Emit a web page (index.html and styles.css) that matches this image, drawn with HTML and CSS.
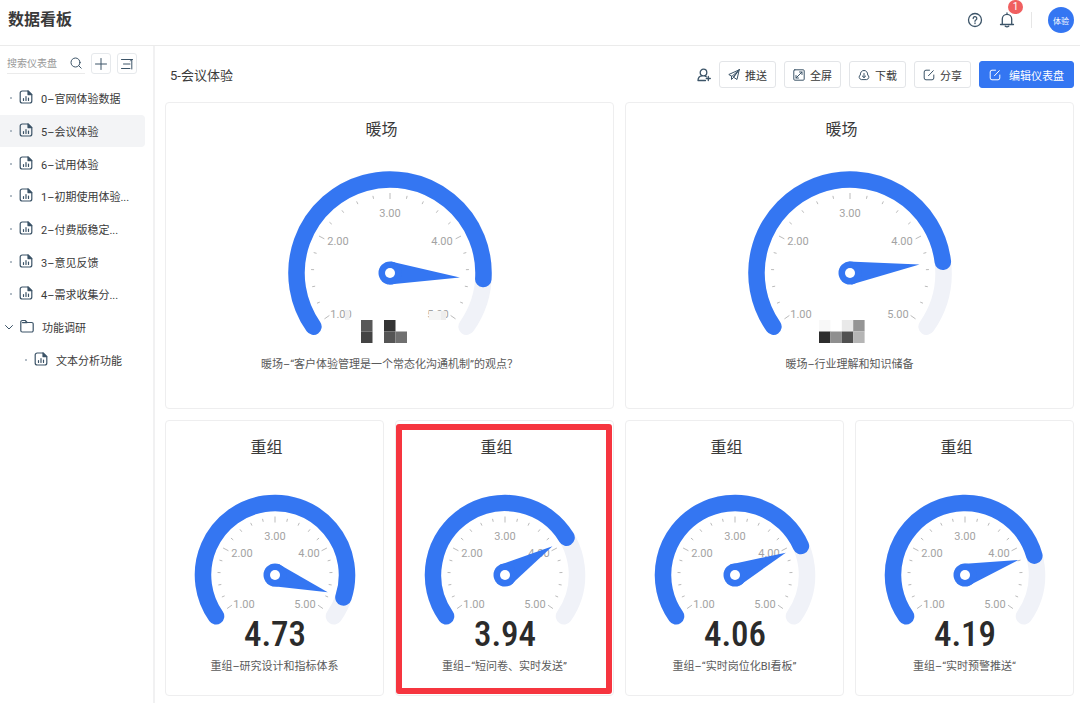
FILE: index.html
```
<!DOCTYPE html>
<html lang="zh-CN">
<head>
  <meta charset="UTF-8" />
  <meta name="viewport" content="width=device-width, initial-scale=1.0" />
  <title>数据看板</title>
  <link rel="stylesheet" href="styles.css">
</head>
<body>
  <svg class="sprite" aria-hidden="true">
    <symbol id="icon-file" viewBox="0 0 14 14">
      <path d="M9 1H3.200A2 2 0 0 0 1.200 3V11a2 2 0 0 0 2 2h7.600a2 2 0 0 0 2-2V4.600z" />
      <path d="M9 1v3.600h3.800z" fill="currentColor" />
      <path d="M4.500 10.500V8.500M7 10.500V6.500M9.500 10.500V8" />
    </symbol>
    <symbol id="icon-folder" viewBox="0 0 14 14">
      <path d="M.8 11.500V3a1.500 1.500 0 0 1 1.500-1.500h3l1.700 2h4.700a1.500 1.500 0 0 1 1.500 1.500v6.500a1.500 1.500 0 0 1-1.500 1.500H2.300a1.500 1.500 0 0 1-1.500-1.500z" />
      <path d="M2.500 3.600H7" />
    </symbol>
    <symbol id="icon-edit" viewBox="0 0 12 12">
      <path d="M6.500 1.200H3a1.800 1.800 0 0 0-1.800 1.800v6A1.800 1.800 0 0 0 3 10.800h6A1.800 1.800 0 0 0 10.800 9V6M5.500 6.700l4.800-5" />
    </symbol>
  </svg>

  <header class="topbar">
    <h1>数据看板</h1>
    <div class="topbar-tools">
      <button class="icon-btn" aria-label="帮助">
        <svg class="icon icon-md" viewBox="0 0 16 16"><circle cx="8" cy="8" r="6.500" /><path d="M6.200 6.500a1.800 1.800 0 1 1 2.700 1.500C8.200 8.400 8 8.700 8 9.300M8 11v.5" /></svg>
      </button>
      <button class="icon-btn bell" aria-label="通知">
        <svg class="icon icon-md" viewBox="0 0 16 16"><path d="M1.500 12.500h13M3.300 12.500V7a4.700 4.700 0 0 1 9.400 0v5.500M8 2.300V1M6.300 14.200q1.700 1.200 3.400 0" /></svg>
        <span class="badge">1</span>
      </button>
      <span class="divider"></span>
      <button class="avatar">体验</button>
    </div>
  </header>

  <div class="layout">
    <aside class="sidebar">
      <div class="search-row">
        <label class="search">
          <input type="search" placeholder="搜索仪表盘" aria-label="搜索仪表盘">
          <svg class="icon icon-sm" viewBox="0 0 12 12"><circle cx="5.500" cy="5.500" r="4.500" /><path d="M8.800 8.800l2.400 2.400" /></svg>
        </label>
        <button class="square-btn" aria-label="新建"><svg class="icon icon-sm" viewBox="0 0 12 12"><path d="M6 .5v11M.5 6h11" /></svg></button>
        <button class="square-btn" aria-label="排序"><svg class="icon icon-sm" viewBox="0 0 12 12"><path d="M.5 1.500h11M2.500 6H9M.5 10.500H9M10.800 11V1.500L9.500 3" /></svg></button>
      </div>
      <ul class="tree">
        <li><a href="#"><i class="dot"></i><svg class="icon icon-file"><use href="#icon-file" /></svg>0–官网体验数据</a></li>
        <li><a href="#" class="active"><i class="dot"></i><svg class="icon icon-file"><use href="#icon-file" /></svg>5–会议体验</a></li>
        <li><a href="#"><i class="dot"></i><svg class="icon icon-file"><use href="#icon-file" /></svg>6–试用体验</a></li>
        <li><a href="#"><i class="dot"></i><svg class="icon icon-file"><use href="#icon-file" /></svg>1–初期使用体验...</a></li>
        <li><a href="#"><i class="dot"></i><svg class="icon icon-file"><use href="#icon-file" /></svg>2–付费版稳定...</a></li>
        <li><a href="#"><i class="dot"></i><svg class="icon icon-file"><use href="#icon-file" /></svg>3–意见反馈</a></li>
        <li><a href="#"><i class="dot"></i><svg class="icon icon-file"><use href="#icon-file" /></svg>4–需求收集分...</a></li>
        <li><a href="#" class="folder"><svg class="icon chevron" viewBox="0 0 8 8"><path d="M.5 2.500L4 6l3.500-3.500" /></svg><svg class="icon icon-file"><use href="#icon-folder" /></svg>功能调研</a></li>
        <li><a href="#" class="child"><i class="dot"></i><svg class="icon icon-file"><use href="#icon-file" /></svg>文本分析功能</a></li>
      </ul>
    </aside>

    <main class="content">
      <div class="toolbar">
        <h2>5-会议体验</h2>
        <button class="icon-btn" aria-label="添加成员">
          <svg class="icon icon-user" viewBox="0 0 14 14"><circle cx="6.500" cy="4.500" r="3.300" /><path d="M8.500 12.500H1c0-2.500 1.500-4.500 4-4.700M8 8q.8.2 1.200.7M11.300 8.500v4M9.300 10.500h4" /></svg>
        </button>
        <button class="btn"><svg class="icon icon-sm" viewBox="0 0 12 12"><path d="M11.200.8L.8 5.500l2.700 1.700zM11.200.8L9 10.500 5.700 8.300zM3.500 7.200v3.300l2.200-2.200L11.200.8" /></svg>推送</button>
        <button class="btn"><svg class="icon icon-sm" viewBox="0 0 12 12"><rect x=".8" y=".8" width="10.400" height="10.400" rx="1" /><path d="M6.500 3H9v2.500M9 3L3 9M3 6.500V9h2.500" /></svg>全屏</button>
        <button class="btn"><svg class="icon icon-sm" viewBox="0 0 12 12"><path d="M3 10.500a2.500 2.500 0 0 1-.7-4.500C2.300 3.200 3.800 1.500 6 1.500S9.700 3.200 9.700 6A2.500 2.500 0 0 1 9 10.500zM6 4.500v4M4.300 7L6 8.600 7.700 7" /></svg>下载</button>
        <button class="btn"><svg class="icon icon-sm"><use href="#icon-edit" /></svg>分享</button>
        <button class="btn btn-primary"><svg class="icon icon-sm"><use href="#icon-edit" /></svg>编辑仪表盘</button>
      </div>

      <div class="cards">
        <section class="card card-lg">
          <h3>暖场</h3>
          <svg class="gauge" viewBox="-110 -110 220 190" data-value="4.5" data-mask="a"></svg>
          <p>暖场–“客户体验管理是一个常态化沟通机制”的观点？</p>
        </section>
        <section class="card card-lg">
          <h3>暖场</h3>
          <svg class="gauge" viewBox="-110 -110 220 190" data-value="4.33" data-mask="b"></svg>
          <p>暖场–行业理解和知识储备</p>
        </section>
        <section class="card">
          <h3>重组</h3>
          <svg class="gauge" viewBox="-90 -90 180 170" data-value="4.73"></svg>
          <p>重组–研究设计和指标体系</p>
        </section>
        <section class="card marked">
          <h3>重组</h3>
          <svg class="gauge" viewBox="-90 -90 180 170" data-value="3.94"></svg>
          <p>重组–“短问卷、实时发送”</p>
        </section>
        <section class="card">
          <h3>重组</h3>
          <svg class="gauge" viewBox="-90 -90 180 170" data-value="4.06"></svg>
          <p>重组–“实时岗位化BI看板”</p>
        </section>
        <section class="card">
          <h3>重组</h3>
          <svg class="gauge" viewBox="-90 -90 180 170" data-value="4.19"></svg>
          <p>重组–“实时预警推送“</p>
        </section>
      </div>
    </main>
  </div>

  <script src="gauge.js"></script>
</body>
</html>
```
FILE: styles.css
```
* {
  box-sizing: border-box;
}

body {
  margin: 0;
  background-color: #fff;
  color: #3a3a3a;
  font-family: Roboto, "Noto Sans CJK SC", sans-serif;
  font-size: 11px;
  min-height: 100vh;
  display: flex;
  flex-direction: column;
}

h1, h2, h3, p, ul {
  margin: 0;
  padding: 0;
}

button {
  font-family: inherit;
  font-size: 11px;
  color: #3a3a3a;
  background: none;
  border: none;
  padding: 0;
  cursor: pointer;
}

.sprite {
  position: absolute;
  width: 0;
  height: 0;
}

.icon {
  flex: none;
  fill: none;
  stroke: currentColor;
  stroke-linecap: round;
  stroke-linejoin: round;
  color: #3c5468;
}

.icon-sm {
  width: 12px;
  height: 12px;
}

.icon-md {
  width: 16px;
  height: 16px;
  stroke-width: 1.3;
}

.icon-user {
  width: 14px;
  height: 14px;
  stroke-width: 1.3;
}

.icon-btn {
  display: flex;
}

/* top bar */
.topbar {
  display: flex;
  justify-content: space-between;
  align-items: center;
  height: 46px;
  padding: 0 6px 5px 8px;
  border-bottom: 1px solid #ebebeb;
}

.topbar h1 {
  font-size: 16px;
  font-weight: 700;
  line-height: 22px;
}

.topbar-tools {
  display: flex;
  align-items: center;
  gap: 16px;
}

.bell {
  position: relative;
}

.badge {
  position: absolute;
  top: -12px;
  right: -8px;
  width: 15px;
  height: 14px;
  border-radius: 7px;
  background-color: #f05f60;
  color: #fff;
  font-size: 10px;
  line-height: 14px;
  text-align: center;
}

.divider {
  width: 1px;
  height: 16px;
  background-color: #e6e6e6;
}

.avatar {
  width: 26px;
  height: 26px;
  border-radius: 50%;
  background-color: #3476f2;
  color: #fff;
  font-size: 8px;
}

/* sidebar */
.layout {
  display: flex;
  flex: 1;
}

.sidebar {
  flex: none;
  width: 155px;
  padding-top: 7px;
  border-right: 2px solid #f1f1f2;
}

.search-row {
  display: flex;
  gap: 6px;
  padding-left: 7px;
}

.search {
  display: flex;
  align-items: center;
  width: 78px;
  border-bottom: 1px solid #ebebeb;
}

.search input {
  flex: 1;
  min-width: 0;
  border: none;
  outline: none;
  padding: 0;
  font-family: inherit;
  font-size: 10px;
}

.search input::placeholder {
  color: #999;
}

.search .icon {
  margin-right: 3px;
}

.square-btn {
  display: flex;
  align-items: center;
  justify-content: center;
  width: 20px;
  height: 21px;
  border: 1px solid #e6e9ec;
  border-radius: 3px;
}

.tree {
  list-style: none;
  display: grid;
  grid-auto-rows: 1fr;
  height: 294px;
  margin-top: 8px;
}

.tree a {
  display: flex;
  align-items: center;
  height: 100%;
  margin-right: 8px;
  padding-left: 10px;
  border-radius: 0 4px 4px 0;
  color: #3a3a3a;
  text-decoration: none;
  white-space: nowrap;
}

.tree a.active {
  background-color: #f3f4f6;
}

.tree a.folder {
  padding-left: 5px;
}

.tree a.child {
  padding-left: 25px;
}

.dot {
  flex: none;
  width: 2px;
  height: 2px;
  margin-right: 7px;
  border-radius: 50%;
  background-color: #9aa7b3;
}

.chevron {
  width: 8px;
  height: 8px;
  margin-right: 7px;
}

.icon-file {
  width: 14px;
  height: 14px;
  margin: 0 8px 2px 0;
  stroke-width: 1.2;
}

/* content */
.content {
  flex: 1;
  min-width: 0;
  padding: 15px 6px 7px 10px;
}

.toolbar {
  display: flex;
  align-items: center;
  gap: 8px;
  margin-bottom: 14px;
}

.toolbar h2 {
  flex: 1;
  padding-left: 5px;
  font-size: 13px;
  font-weight: 400;
}

.btn {
  display: flex;
  align-items: center;
  gap: 5px;
  height: 27px;
  padding: 0 8px;
  border: 1px solid #e3e5e8;
  border-radius: 3px;
}

.btn-primary {
  gap: 8px;
  padding: 0 9px;
  background-color: #3476f2;
  border-color: #3476f2;
  color: #fff;
}

.btn-primary .icon {
  color: #fff;
}

.cards {
  display: grid;
  grid-template-columns: repeat(4, 1fr);
  gap: 11px;
}

.card {
  display: flex;
  flex-direction: column;
  align-items: center;
  padding: 15px 0 18px;
  border: 1px solid #eeeeef;
  border-radius: 4px;
}

.card h3 {
  padding-right: 16px;
  font-size: 16px;
  line-height: 24px;
  font-weight: 400;
}

.card p {
  margin-top: 2px;
  color: #5a5a5a;
  line-height: 20px;
}

.card-lg {
  grid-column: span 2;
  padding-bottom: 33px;
}

.marked {
  position: relative;
}

.marked::after {
  content: "";
  position: absolute;
  top: 3px;
  right: 1px;
  bottom: 1px;
  left: 0;
  border: 6px solid #f6353f;
  border-radius: 3px;
}

/* gauge */
.gauge {
  width: 180px;
  height: 170px;
  margin-top: 25px;
}

.card-lg .gauge {
  width: 220px;
  height: 190px;
  margin-top: 21px;
}

.gauge-track,
.gauge-bar {
  fill: none;
  stroke: #f0f2f8;
  stroke-width: 16.5;
  stroke-linecap: round;
}

.gauge-bar {
  stroke: #3476f2;
}

.gauge-tick {
  stroke: #bbb;
}

.gauge-label {
  fill: #a3a3a3;
  font-size: 11px;
  text-anchor: middle;
}

.gauge-needle {
  fill: #3476f2;
}

.gauge-hole {
  fill: #fff;
}

.gauge-value {
  fill: #2b2b2b;
  font-family: "Roboto Condensed", "Liberation Sans Narrow", Roboto, sans-serif;
  font-size: 35px;
  font-weight: 500;
  text-anchor: middle;
}
```
FILE: gauge.js
```
const NS = 'http://www.w3.org/2000/svg';
const START = 215;
const STEP = 62.5;

// label centres for 1.00 to 5.00
const LARGE = { r: 93.5, needle: 70, labels: [[-49, 41], [-52, -32], [0, -60], [52, -32], [48, 41]] };
const SMALL = { r: 72, needle: 55.5, labels: [[-31, 29], [-33, -22], [0, -39], [34, -22], [30, 29]] };

// mosaic blocks: x, y, width, height, colour
const MASKS = {
  a: [
    [-45, 37, 4.5, 10, '#efefef'], [39, 38, 12, 9, '#f5f5f5'], [51, 38, 5, 9, '#ededed'],
    [-29, 47, 11.5, 11.5, '#585858'], [-29, 58.5, 11.5, 11.5, '#444'],
    [-6, 47, 11.5, 11.5, '#343434'], [-6, 58.5, 11.5, 11.5, '#555'], [5.5, 58.5, 11.5, 11.5, '#707070']
  ],
  b: [
    [-31, 47, 11.4, 11.5, '#f8f8f8'], [-8.2, 47, 11.4, 11.5, '#e9e9e9'], [3.2, 47, 11.4, 11.5, '#959595'],
    [-31, 58.5, 11.4, 11.5, '#2d2d2d'], [-19.6, 58.5, 11.4, 11.5, '#8f8f8f'],
    [-8.2, 58.5, 11.4, 11.5, '#505050'], [3.2, 58.5, 11.4, 11.5, '#b5b5b5']
  ]
};

function add(svg, tag, attrs, text) {
  const el = document.createElementNS(NS, tag);
  for (const key in attrs) {
    el.setAttribute(key, attrs[key]);
  }
  if (text) el.textContent = text;
  svg.appendChild(el);
}

function point(r, deg) {
  const a = deg * Math.PI / 180;
  return [r * Math.cos(a), -r * Math.sin(a)];
}

function arc(r, from, to) {
  const large = from - to > 180 ? 1 : 0;
  return `M${point(r, from)}A${r} ${r} 0 ${large} 1 ${point(r, to)}`;
}

function drawGauge(svg) {
  const value = Number(svg.dataset.value);
  const mask = MASKS[svg.dataset.mask];
  const size = mask ? LARGE : SMALL;
  const angle = START - (value - 1) * STEP;

  add(svg, 'path', { class: 'gauge-track', d: arc(size.r, START, -35) });
  add(svg, 'path', { class: 'gauge-bar', d: arc(size.r, START, angle) });

  for (let i = 0; i <= 20; i++) {
    const major = i % 5 === 0;
    const outer = size.r - (major ? 13.5 : 14.5);
    const [x1, y1] = point(outer, START - i * STEP / 5);
    const [x2, y2] = point(outer - (major ? 6 : 3), START - i * STEP / 5);
    add(svg, 'line', { class: 'gauge-tick', x1, y1, x2, y2 });
  }

  size.labels.forEach(([x, y], i) => {
    add(svg, 'text', { class: 'gauge-label', x, y: y + 4 }, (i + 1).toFixed(2));
  });

  const base = [point(11.5, angle + 90), point(size.needle, angle), point(11.5, angle - 90)];
  add(svg, 'polygon', { class: 'gauge-needle', points: base.join(' ') });
  add(svg, 'circle', { class: 'gauge-needle', r: 11.5 });
  add(svg, 'circle', { class: 'gauge-hole', r: 5 });

  if (mask) {
    mask.forEach(([x, y, width, height, fill]) => add(svg, 'rect', { x, y, width, height, fill }));
  } else {
    add(svg, 'text', { class: 'gauge-value', x: 0, y: 71 }, value.toFixed(2));
  }
}

document.querySelectorAll('.gauge').forEach(drawGauge);
```
